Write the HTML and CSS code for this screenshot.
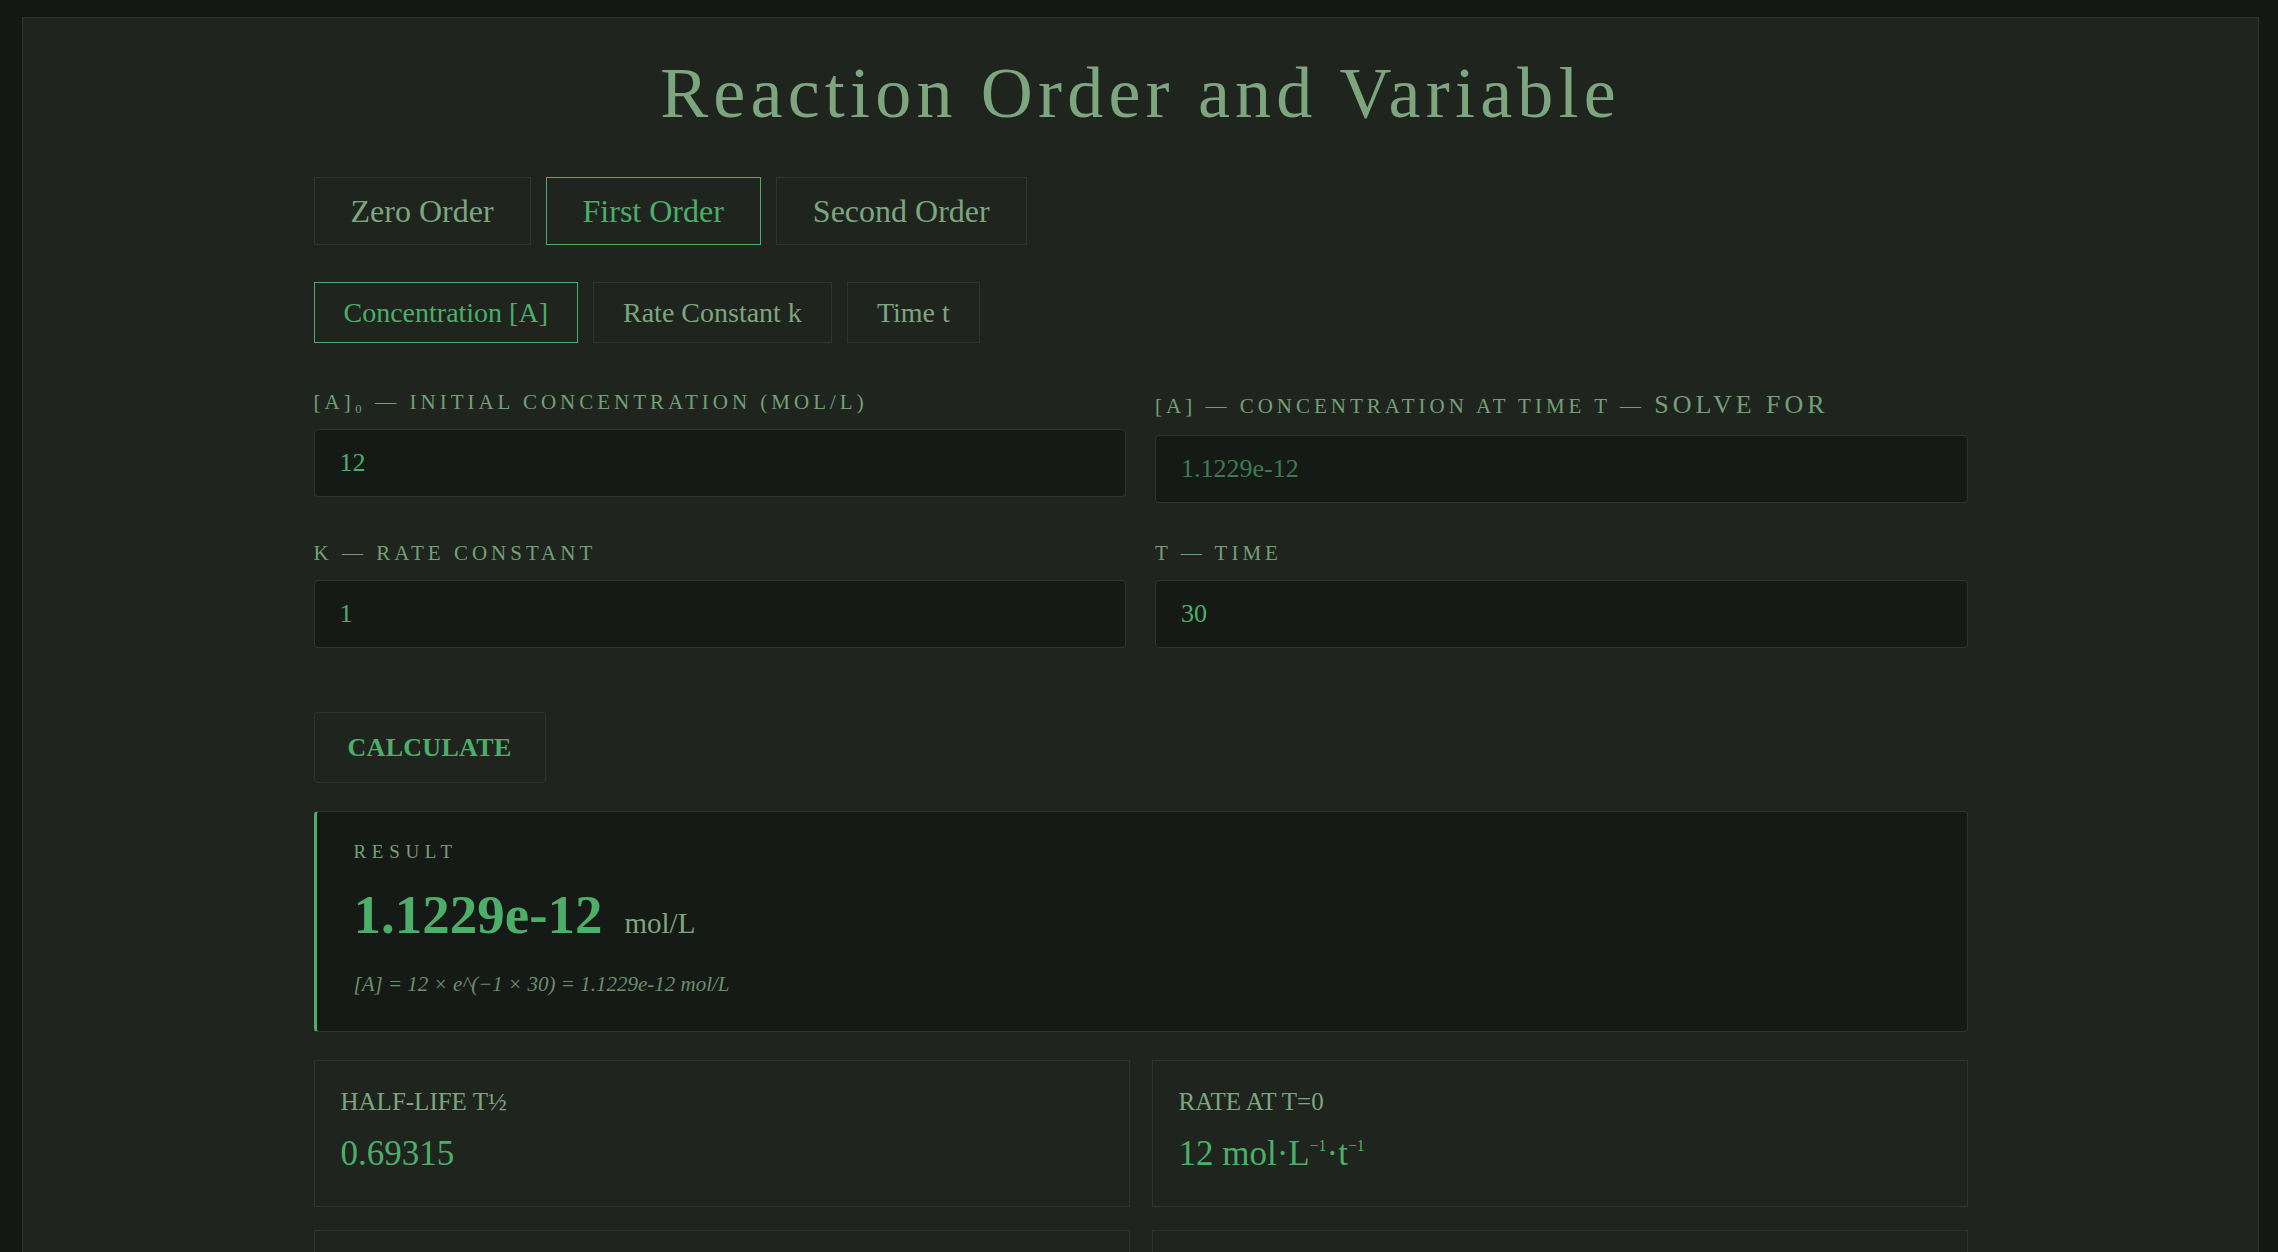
FILE: index.html
```html
<!DOCTYPE html>
<html lang="en">
<head>
  <meta charset="UTF-8">
  <meta name="viewport" content="width=device-width, initial-scale=1.0">
  <title>Reaction Order and Variable</title>
  <link rel="stylesheet" href="styles.css">
</head>
<body>
  <div class="panel">
    <div class="wrap">
      <h1>Reaction Order and Variable</h1>

      <!-- order tabs -->
      <div class="tabs order-tabs">
        <button class="tab">Zero Order</button>
        <button class="tab active">First Order</button>
        <button class="tab">Second Order</button>
      </div>

      <!-- which variable to solve -->
      <div class="tabs var-tabs">
        <button class="tab active">Concentration [A]</button>
        <button class="tab">Rate Constant k</button>
        <button class="tab">Time t</button>
      </div>

      <form class="fields">
        <div class="field">
          <label for="a0">[A]₀ — Initial Concentration (mol/L)</label>
          <input type="text" id="a0" value="12">
        </div>
        <div class="field">
          <label for="a">[A] — Concentration at time t — <span class="solve">Solve for</span></label>
          <input type="text" id="a" class="solved" value="1.1229e-12" readonly>
        </div>
        <div class="field">
          <label for="k">k — Rate Constant</label>
          <input type="text" id="k" value="1">
        </div>
        <div class="field">
          <label for="t">t — Time</label>
          <input type="text" id="t" value="30">
        </div>
      </form>

      <button class="calc">Calculate</button>

      <div class="result">
        <div class="result-label">Result</div>
        <div class="result-value">
          <span class="num">1.1229e-12</span>
          <span class="unit">mol/L</span>
        </div>
        <div class="formula">[A] = 12 × e^(−1 × 30) = 1.1229e-12 mol/L</div>
      </div>

      <div class="stats">
        <div class="stat">
          <div class="stat-label">Half-life t½</div>
          <div class="stat-value">0.69315</div>
        </div>
        <div class="stat">
          <div class="stat-label">Rate at t=0</div>
          <div class="stat-value">12 mol·L<sup>−1</sup>·t<sup>−1</sup></div>
        </div>
        <div class="stat">
          <div class="stat-label">ln([A]₀/[A])</div>
          <div class="stat-value">30</div>
        </div>
        <div class="stat">
          <div class="stat-label">Fraction remaining</div>
          <div class="stat-value">9.3576e-14</div>
        </div>
      </div>
    </div>
  </div>
</body>
</html>
```

FILE: styles.css
```css
* {
  box-sizing: border-box;
}

body {
  margin: 0;
  padding: 17px 19px 0 22px;
  background-color: #141814;
  font-family: "Liberation Serif", "Times New Roman", serif;
  color: #7da67e;
}

.panel {
  background-color: #1f241f;
  border: 1px solid #2e352e;
  padding: 35px 0 60px;
}

.wrap {
  max-width: 1654px;
  margin: 0 auto;
}

h1 {
  margin: 0 0 44px;
  font-size: 72px;
  line-height: 80px;
  font-weight: normal;
  letter-spacing: 5.2px;
  text-align: center;
  color: #7da67e;
}

.tabs {
  display: flex;
  gap: 15px;
}

.tab {
  font-family: inherit;
  background-color: transparent;
  border: 1px solid #2e352e;
  color: #7da67e;
  cursor: pointer;
}

.tab.active {
  border-color: #4cae68;
  color: #4cae68;
}

.order-tabs {
  margin-bottom: 37px;
}

.order-tabs .tab {
  font-size: 32px;
  line-height: 34px;
  padding: 16px 36px;
}

.var-tabs {
  margin-bottom: 47px;
}

.var-tabs .tab {
  font-size: 28px;
  line-height: 29px;
  padding: 15px 29px;
}

.fields {
  display: grid;
  grid-template-columns: 1fr 1fr;
  column-gap: 29px;
  row-gap: 38px;
}

.field label {
  display: block;
  margin-bottom: 15px;
  font-size: 21px;
  line-height: 1.15;
  letter-spacing: 4px;
  text-transform: uppercase;
  color: #73a075;
}

.field label .solve {
  font-size: 26px;
}

.field input {
  width: 100%;
  height: 68px;
  padding: 0 25px;
  background-color: #161a16;
  border: 1px solid #2e352e;
  border-radius: 4px;
  font-family: inherit;
  font-size: 26px;
  color: #4cae68;
  outline: none;
}

.field input.solved {
  color: #3e7a4f;
}

.calc {
  display: block;
  margin-top: 64px;
  height: 71px;
  padding: 0 33px;
  background-color: #1f241f;
  border: 1px solid #2e352e;
  border-radius: 4px;
  font-family: inherit;
  font-size: 26px;
  font-weight: bold;
  letter-spacing: 0.3px;
  text-transform: uppercase;
  color: #4cae68;
  cursor: pointer;
}

.result {
  margin-top: 28px;
  padding: 29px 37px 35px;
  background-color: #161a16;
  border: 1px solid #2e352e;
  border-left: 3px solid #4cae68;
  border-radius: 4px;
}

.result-label {
  font-size: 19px;
  line-height: 1.15;
  letter-spacing: 5.7px;
  text-transform: uppercase;
  color: #73a075;
}

.result-value {
  display: flex;
  align-items: baseline;
  gap: 22px;
  margin-top: 20px;
  line-height: 1.15;
}

.result-value .num {
  font-size: 55px;
  font-weight: bold;
  color: #4cae68;
}

.result-value .unit {
  font-size: 29px;
  color: #7da67e;
}

.formula {
  margin-top: 26px;
  font-size: 21px;
  line-height: 1.15;
  font-style: italic;
  color: #6b8f6c;
}

.stats {
  display: grid;
  grid-template-columns: 1fr 1fr;
  column-gap: 22px;
  row-gap: 23px;
  margin-top: 28px;
}

.stat {
  border: 1px solid #2e352e;
  padding: 27px 26px 32px;
}

.stat-label {
  font-size: 25px;
  line-height: 1.15;
  text-transform: uppercase;
  color: #7da67e;
}

.stat-value {
  margin-top: 17px;
  font-size: 35px;
  line-height: 1.15;
  color: #4cae68;
}

.stat-value sup {
  font-size: 0.45em;
  vertical-align: 0.9em;
  line-height: 0;
}
```
